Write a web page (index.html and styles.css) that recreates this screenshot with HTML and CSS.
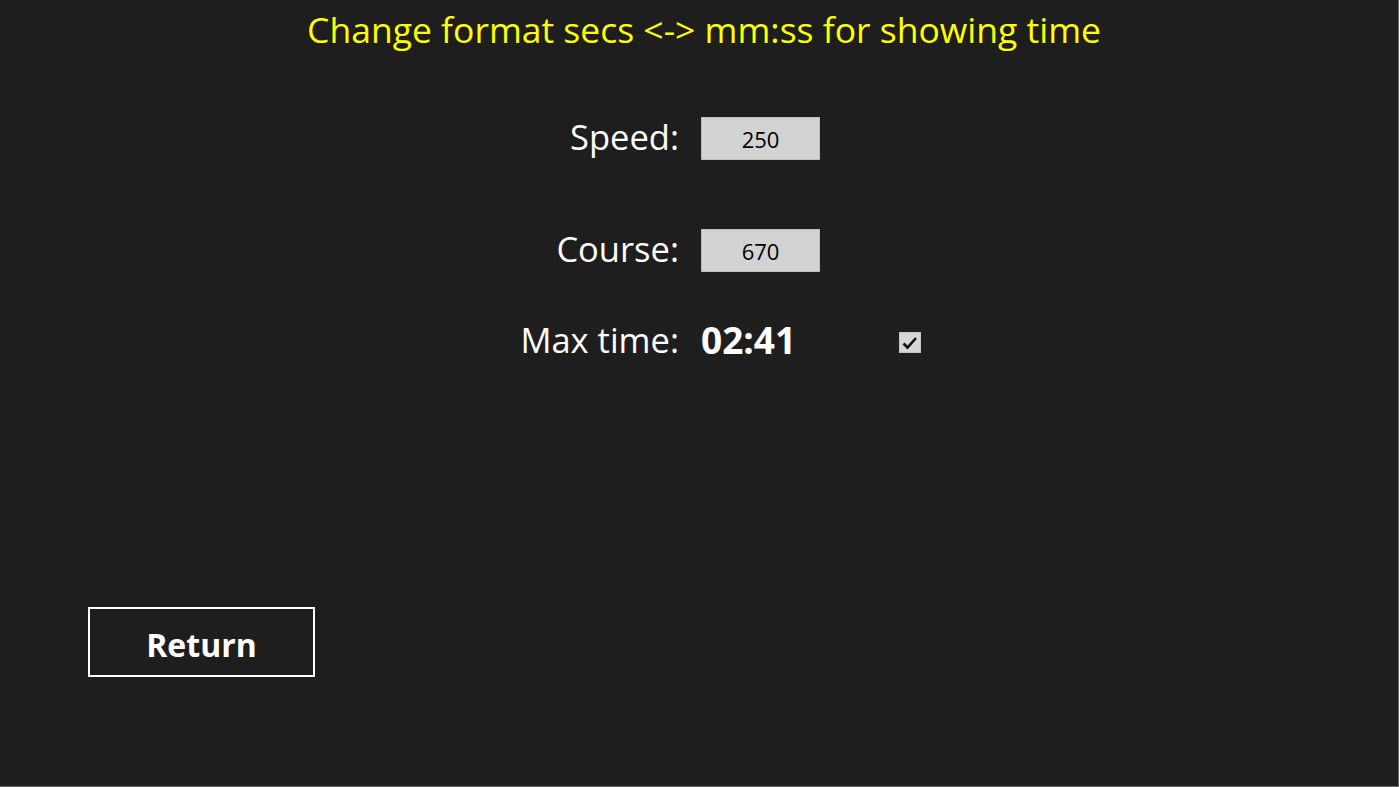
FILE: index.html
```html
<!DOCTYPE html>
<html>
<head>
<meta charset="utf-8">
<link rel="stylesheet" href="styles.css">
</head>
<body>
<div class="page">
  <h1 class="title">Change format secs &lt;-&gt; mm:ss for showing time</h1>
  <div class="form">
    <div class="label row-speed">Speed:</div>
    <div class="box row-speed">250</div>
    <div class="label row-course">Course:</div>
    <div class="box row-course">670</div>
    <div class="label row-max">Max time:</div>
    <div class="value row-max">02:41</div>
    <div class="check row-max">
      <svg width="22" height="21" viewBox="0 0 22 21"><rect x="0.5" y="0.5" width="21" height="20" fill="#d6d6d6" stroke="#c4c4c4"/><path d="M4.5 11.5 L8.5 15.5 L17 6" fill="none" stroke="#111" stroke-width="2.6"/></svg>
    </div>
  </div>
  <div class="spacer"></div>
  <div class="footer">
    <button class="return">Return</button>
  </div>
</div>
</body>
</html>
```
FILE: styles.css
```css
html, body {
  margin: 0;
  padding: 0;
  background: #1e1e1e;
}
.page {
  width: 1399px;
  height: 787px;
  box-sizing: border-box;
  border-right: 1px solid #6a6a6a;
  border-bottom: 1px solid #6a6a6a;
  display: flex;
  flex-direction: column;
  font-family: "Open Sans", "Noto Sans", sans-serif;
  color: #ffffff;
}
.title {
  margin: 6px 0 0 0;
  font-weight: 400;
  font-size: 35.5px;
  line-height: 46px;
  color: #ffff00;
  text-align: center;
  padding-left: 10px;
}
.form {
  margin-top: 65px;
  display: grid;
  grid-template-columns: 679px 119px auto;
  column-gap: 22px;
  grid-template-rows: 43px 43px 43px;
  row-gap: 69px;
  align-items: center;
}
.label {
  grid-column: 1;
  text-align: right;
  font-size: 34.5px;
  line-height: 43px;
  margin-top: -4px;
}
.row-speed { grid-row: 1; }
.row-course { grid-row: 2; }
.row-max { grid-row: 3; }
.box {
  grid-column: 2;
  height: 43px;
  box-sizing: border-box;
  background: #d3d3d3;
  border: 1px solid #bdbdbd;
  color: #000;
  font-size: 22px;
  line-height: 43px;
  text-align: center;
}
.row-max.label, .row-max.value { align-self: start; margin-top: -23px; }
.value {
  grid-column: 2;
  font-size: 37px;
  font-weight: 700;
  line-height: 43px;
}
.check {
  grid-column: 3;
  align-self: start;
  margin-left: 57px;
  margin-top: -9px;
  height: 21px;
}
.check svg { display: block; }
.spacer { flex: 1; }
.footer {
  padding: 0 0 109px 88px;
}
.return {
  width: 227px;
  height: 70px;
  background: transparent;
  border: 2px solid #ffffff;
  color: #ffffff;
  font-family: "Open Sans", "Noto Sans", sans-serif;
  font-size: 32px;
  font-weight: 700;
  padding: 4px 0 0 0;
  display: flex;
  align-items: center;
  justify-content: center;
}
```
